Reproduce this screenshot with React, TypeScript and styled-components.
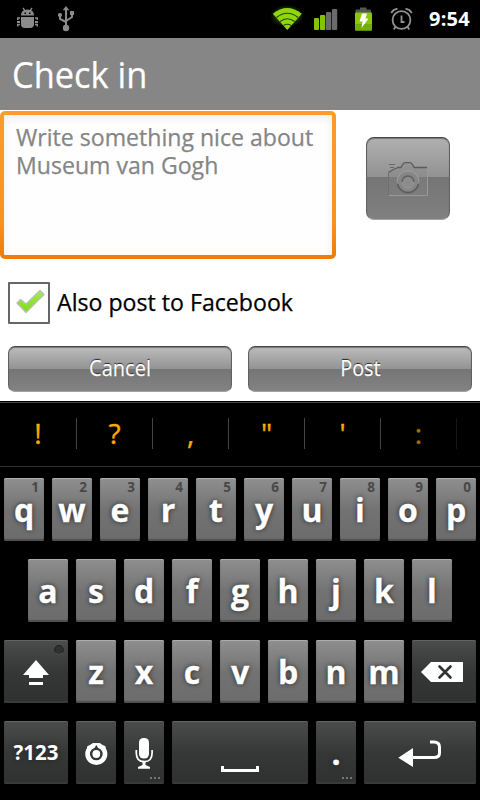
import React from "react";
import styled, { createGlobalStyle, css } from "styled-components";

const GlobalStyle = createGlobalStyle`
  * { box-sizing: border-box; }
  body { margin: 0; background: #fff; font-family: "Open Sans", "Noto Sans", sans-serif; }
`;

const Screen = styled.div`
  width: 480px;
  height: 800px;
  display: flex;
  flex-direction: column;
  overflow: hidden;
  background: #fff;
`;

const StatusBar = styled.header`
  height: 38px;
  display: flex;
  justify-content: space-between;
  background: #000;
`;

const StatusGroup = styled.div`
  display: flex;
`;

const Clock = styled.span`
  width: 51px;
  margin-left: 15px;
  color: #fff;
  font-size: 20px;
  font-weight: 700;
  line-height: 38px;
  letter-spacing: 0.2px;
  white-space: nowrap;
`;

/* Slightly condensed text, close to the proportions of Droid Sans. */
const Condensed = styled.span<{ $scale: number; $centered?: boolean }>`
  display: inline-block;
  transform: scaleX(${(p) => p.$scale});
  transform-origin: ${(p) => (p.$centered ? "center" : "left")};
  -webkit-text-stroke: 0.25px currentColor;
  white-space: nowrap;
`;

const TitleBar = styled.h1`
  height: 72px;
  margin: 0;
  padding-left: 12px;
  background: #868686;
  color: #fff;
  font-size: 36px;
  font-weight: 400;
  line-height: 73px;
`;

const Form = styled.main`
  height: 291px;
  padding-top: 1px;
`;

const ComposeRow = styled.div`
  display: flex;
  align-items: flex-start;
`;

const EditFrame = styled.div`
  width: 336px;
  height: 148px;
  padding: 4px;
  border-radius: 5px;
  background: linear-gradient(#fb9d2b, #f8921f 75%, #ef7a06);
`;

const EditField = styled.div`
  height: 140px;
  padding: 8px 0 0 12px;
  border-radius: 1px;
  background: #fefefe;
  box-shadow: inset 0 3px 9px #ededf0;
  color: #858585;
  font-size: 24px;
  line-height: 28px;
`;

const glossy = css`
  border: 1px solid #606060;
  border-top: 1px solid #44444a;
  border-bottom-color: #a2a2a2;
  background: linear-gradient(#bcbcbc, #939393 50%, #757575 50%, #838383);
  box-shadow: inset 0 1px 1px #77777a;
`;

const CameraButton = styled.button`
  ${glossy}
  width: 84px;
  height: 83px;
  margin: 26px 0 0 30px;
  padding: 0;
  border-radius: 8px;
  display: flex;
  background: linear-gradient(#b0b0b0, #929292 48%, #757575 48%, #808080);
`;

const CheckRow = styled.label`
  display: flex;
  height: 42px;
  margin: 23px 0 0 8px;
  gap: 7px;
`;

const CheckBox = styled.span`
  width: 42px;
  height: 42px;
  border: 2px solid #666;
  border-radius: 1px;
  display: flex;
  background: #fff;
`;

const CheckLabel = styled.span`
  color: #000;
  font-size: 24px;
  line-height: 39px;
`;

const ButtonRow = styled.div`
  display: grid;
  grid-template-columns: 1fr 1fr;
  gap: 16px;
  padding: 22px 8px 0;
`;

const ActionButton = styled.button`
  ${glossy}
  height: 46px;
  padding: 0 0 4px;
  border-radius: 7px;
  color: #fff;
  font-family: inherit;
  font-size: 22px;
  line-height: 40px;
  text-shadow: 0 -1px 1px #222;
`;

const Keyboard = styled.section`
  flex: 1;
  background: #000;
  border-top: 1px solid #000;
`;

const Suggestions = styled.div`
  height: 65px;
  padding-bottom: 2px;
  display: flex;
  align-items: center;
  border-top: 1px solid #444;
  border-bottom: 1px solid #303030;
`;

const Suggestion = styled.span<{ $fading?: boolean }>`
  width: 76px;
  height: 31px;
  border-right: 1px solid ${(p) => (p.$fading ? "#151515" : "#444")};
  color: ${(p) => (p.$fading ? "#a87000" : "#ffa900")};
  font-size: 28px;
  line-height: 30px;
  text-align: center;
  -webkit-text-stroke: 0.4px currentColor;
  &:first-child { width: 77px; }
`;

const Keys = styled.div`
  display: flex;
  flex-direction: column;
  gap: 18px;
  padding-top: 11px;
`;

const KeyRow = styled.div`
  display: flex;
  justify-content: center;
  gap: 8px;
`;

const Key = styled.div<{ $dark?: boolean; $width?: number }>`
  position: relative;
  width: ${(p) => p.$width ?? 40}px;
  height: 63px;
  display: flex;
  justify-content: center;
  border-radius: 2px;
  background: ${(p) =>
    p.$dark ? "linear-gradient(#4b4d4c, #363837 50%, #2f3030)" : "linear-gradient(#8f8f8f, #727272 52%, #6c6c6c)"};
  box-shadow: ${(p) =>
    p.$dark
      ? "inset 0 1px 0 #626463, inset 0 -2px 1px #3a3b3a"
      : "inset 0 1px 0 #adadad, inset 0 -2px 1px #4f4f4f"};
`;

const Letter = styled.span<{ $small?: boolean }>`
  color: #fff;
  font-size: ${(p) => (p.$small ? 20.5 : 32)}px;
  font-weight: 700;
  line-height: ${(p) => (p.$small ? 62 : 63)}px;
  text-shadow: 0 0 5px #222;
  -webkit-text-stroke: ${(p) => (p.$small ? 0 : 0.3)}px #fff;
`;

const Hint = styled.span`
  position: absolute;
  top: 1px;
  right: 5px;
  color: #484848;
  font-size: 13.5px;
  font-weight: 700;
  line-height: 17px;
`;

const More = styled.svg`
  position: absolute;
  right: 4px;
  bottom: 5px;
`;

const BugIcon = () => (
  <svg width="21" height="38" viewBox="17 0 21 38">
    <g fill="#8b8b8b">
      <path d="M21 15.500q0-6 6.500-6t6.500 6z" />
      <path d="M21 17h13v7q0 4-4 4h-5q-4 0-4-4z" />
      <path d="M23 8l2.500 3.500M32 8l-2.500 3.500" fill="none" stroke="#8b8b8b" strokeWidth="1.300" />
      <path d="M17 17.300h3v1.500h-1.500v1.200H17zM17 21h3v2h-3zM17 26.500v-2.700h3v1.500h-1.500v1.200zM38 17.300h-3v1.500h1.500v1.200H38zM38 21h-3v2h3zM38 26.500v-2.700h-3v1.500h1.500v1.200z" />
    </g>
    <path d="M24.500 12.500h1.500v1.500h-1.500zM29 12.500h1.500v1.500h-1.500z" fill="#000" />
  </svg>
);

const UsbIcon = () => (
  <svg width="17" height="38" viewBox="58 0 17 38">
    <g fill="#8b8b8b">
      <path d="M66 6l3.300 4.300h-6.600z" />
      <circle cx="66" cy="28" r="3.200" />
      <circle cx="60" cy="15" r="2.100" />
      <path d="M70 11h4v4h-4z" />
      <path d="M66 9v18M60 14v5l6 3M72 14v3l-6 4" fill="none" stroke="#8b8b8b" strokeWidth="2" />
    </g>
  </svg>
);

const WifiIcon = () => (
  <svg width="34" height="38" viewBox="270 0 34 38">
    <defs>
      <radialGradient id="wifiGlow">
        <stop offset="0.500" stopColor="#4e8300" stopOpacity="0.550" />
        <stop offset="1" stopColor="#4e8300" stopOpacity="0" />
      </radialGradient>
    </defs>
    <ellipse cx="287" cy="16" rx="17" ry="11" fill="url(#wifiGlow)" />
    <path d="M272.800 13.800Q287 2.300 301.800 13.800L287.300 30z" fill="#91d60b" />
    <g fill="none" stroke="#234800" strokeWidth="1.200">
      <path d="M276.500 17.500q10.800-8.500 21.500 0M280 21.500q7.300-5.500 14.600 0M283.500 25.500q3.800-2.500 7.600 0" />
    </g>
  </svg>
);

const SignalIcon = () => (
  <svg width="24" height="38" viewBox="314 0 24 38">
    <rect x="314" y="18" width="5" height="12" rx="1" fill="#82c30a" />
    <rect x="320" y="15" width="5.300" height="15" rx="1" fill="#82c30a" />
    <rect x="326" y="12" width="5.300" height="18" rx="1" fill="#6b6b6b" />
    <rect x="332" y="9" width="5.200" height="21" rx="1" fill="#6b6b6b" />
  </svg>
);

const BatteryIcon = () => (
  <svg width="19" height="38" viewBox="353.500 0 19 38">
    <path d="M355 13v-2.500q0-1 1-1h3.500v-2h6.500v2h3.500q1 0 1 1V13z" fill="#555" />
    <rect x="354.500" y="12.500" width="17" height="18" rx="1" fill="#88c808" />
    <rect x="354.500" y="24" width="17" height="6.500" rx="1" fill="#74ad05" />
    <path d="M361.500 13.500h5l-1.500 5h3L361 28l1-6.500h-3z" fill="#fff" />
  </svg>
);

const AlarmIcon = () => (
  <svg width="24" height="38" viewBox="390 0 24 38">
    <g fill="none" stroke="#929292" strokeWidth="1.800">
      <circle cx="401.500" cy="20" r="8.900" />
      <path d="M391.200 13q2-3.500 6.300-4.300M411.800 13q-2-3.500-6.300-4.300" />
      <path d="M401.500 15.500v6.500h3M395.700 26.500l-1.900 3M407.300 26.500l1.900 3" />
    </g>
  </svg>
);

const CameraIcon = () => (
  <svg width="82" height="81" viewBox="367 138 82 81" fill="none">
    <path d="M388.500 195V172q5-3.500 9.500-4.500h3l1.500-3q1-2 3-2h4q2 0 3 2l1.500 3h13V195z" fill="#848484" fillOpacity="0.350" />
    <path d="M388.500 172.500q5-3.500 9.500-5h3l1.500-3q1-1.800 3-1.800h4q2 0 3 1.800l1.500 3h13" stroke="#5c5c5c" strokeWidth="1.300" />
    <path d="M388.500 173v22" stroke="#707070" />
    <path d="M389 195.500H427.500V168.500" stroke="#999" />
    <path d="M389 164.500h6M390 167.500h4" stroke="#686868" />
    <circle cx="408" cy="182" r="11" fill="#868686" />
    <path d="M397.500 184a10.700 10.700 0 0 0 21 0" stroke="#5c5c5c" strokeWidth="1.600" />
    <path d="M397 182a11 11 0 0 1 22 0" stroke="#a0a0a0" />
    <circle cx="408" cy="182" r="6" fill="#8c8c8c" stroke="#999" />
    <path d="M402 182a6 6 0 0 1 12 0" stroke="#5e5e5e" strokeWidth="1.500" />
  </svg>
);

const CheckIcon = () => (
  <svg width="38" height="38" viewBox="10 284 38 38">
    <defs>
      <linearGradient id="tick" x1="0" y1="0" x2="0" y2="1">
        <stop stopColor="#a6ee45" />
        <stop offset="1" stopColor="#7edb16" />
      </linearGradient>
    </defs>
    <path d="M17 303l3.500-3.500 5.500 4.500 14-13.500 4 4L26 312.500z" fill="url(#tick)" stroke="#b9bfba" strokeWidth="1.400" strokeLinejoin="round" />
  </svg>
);

const ShiftIcon = () => (
  <svg width="64" height="63">
    <path d="M32 20L45 35h-6v3H25v-3h-6zM25 42h14v3H25z" fill="#fff" />
    <circle cx="55" cy="9.700" r="4.300" fill="#303131" stroke="#1d1e1e" />
    <path d="M51.500 13q3.500 3 7 0" fill="none" stroke="#505251" />
  </svg>
);

const DeleteIcon = () => (
  <svg width="64" height="63">
    <path d="M9 32L19 22h32v20H19z" fill="#fff" />
    <path d="M27.500 26.500l11 11M38.500 26.500l-11 11" stroke="#303131" strokeWidth="2.600" strokeLinecap="round" />
  </svg>
);

const SettingsIcon = () => (
  <svg width="40" height="63">
    <circle cx="20.300" cy="33" r="8.700" fill="none" stroke="#fff" strokeWidth="4.700" />
    <g fill="#fff">
      <circle cx="17.700" cy="24" r="2" />
      <circle cx="23" cy="24" r="2" />
      <circle cx="13" cy="26.500" r="2" />
      <circle cx="27.700" cy="26.500" r="2" />
    </g>
    <path d="M20.300 24l3 5h-6z" fill="#343535" />
    <circle cx="20.300" cy="33" r="3.900" fill="#fff" />
  </svg>
);

const MicIcon = () => (
  <svg width="40" height="63">
    <rect x="15" y="17" width="10" height="20.500" rx="4.500" fill="#fff" />
    <path d="M12.300 29v3q0 8.700 7.900 8.700t7.900-8.700v-3" fill="none" stroke="#fff" strokeWidth="1.700" />
    <path d="M18.500 40h3v4l4.500 2v1.700H14V46l4.500-2z" fill="#fff" />
  </svg>
);

const SpaceIcon = () => (
  <svg width="136" height="63">
    <path d="M49 45h3v3h32v-3h3v6H49z" fill="#fff" />
  </svg>
);

const EnterIcon = () => (
  <svg width="112" height="63">
    <path d="M34.300 36.700L49 27v19z" fill="#fff" />
    <path d="M48 36.500h22q5.500 0 5.500-4.500v-6q0-5-5.500-5h-4" fill="none" stroke="#fff" strokeWidth="3" />
  </svg>
);

const MoreDots = () => (
  <More width="10" height="2">
    <path d="M0 0h2v2H0zM4 0h2v2H4zM8 0h2v2H8z" fill="#777" />
  </More>
);

const LeftIcons = styled(StatusGroup)`
  padding-left: 17px;
  gap: 20px;
`;

const RightIcons = styled(StatusGroup)`
  & > svg:nth-child(2) { margin-left: 10px; }
  & > svg:nth-child(3) { margin-left: 15.5px; }
  & > svg:nth-child(4) { margin-left: 17.5px; }
`;

const SUGGESTIONS = ["!", "?", ",", '"', "'", ":"];

export default function App() {
  return (
    <>
      <GlobalStyle />
      <Screen>
        <StatusBar>
          <LeftIcons>
            <BugIcon />
            <UsbIcon />
          </LeftIcons>
          <RightIcons>
            <WifiIcon />
            <SignalIcon />
            <BatteryIcon />
            <AlarmIcon />
            <Clock>9:54</Clock>
          </RightIcons>
        </StatusBar>
        <TitleBar>
          <Condensed $scale={0.955}>Check in</Condensed>
        </TitleBar>
        <Form>
          <ComposeRow>
            <EditFrame>
              <EditField>
                <Condensed $scale={0.962}>
                  Write something nice about
                  <br />
                  Museum van Gogh
                </Condensed>
              </EditField>
            </EditFrame>
            <CameraButton>
              <CameraIcon />
            </CameraButton>
          </ComposeRow>
          <CheckRow>
            <CheckBox>
              <CheckIcon />
            </CheckBox>
            <CheckLabel>
              <Condensed $scale={0.964}>Also post to Facebook</Condensed>
            </CheckLabel>
          </CheckRow>
          <ButtonRow>
            <ActionButton>
              <Condensed $scale={0.91} $centered>
                Cancel
              </Condensed>
            </ActionButton>
            <ActionButton>
              <Condensed $scale={0.9} $centered>
                Post
              </Condensed>
            </ActionButton>
          </ButtonRow>
        </Form>
        <Keyboard>
          <Suggestions>
            {SUGGESTIONS.map((s) => (
              <Suggestion key={s} $fading={s === ":"}>
                {s}
              </Suggestion>
            ))}
          </Suggestions>
          <Keys>
            <KeyRow>
              {[..."qwertyuiop"].map((c, i) => (
                <Key key={c}>
                  <Hint>{(i + 1) % 10}</Hint>
                  <Letter>{c}</Letter>
                </Key>
              ))}
            </KeyRow>
            <KeyRow>
              {[..."asdfghjkl"].map((c) => (
                <Key key={c}>
                  <Letter>{c}</Letter>
                </Key>
              ))}
            </KeyRow>
            <KeyRow>
              <Key $dark $width={64}>
                <ShiftIcon />
              </Key>
              {[..."zxcvbnm"].map((c) => (
                <Key key={c}>
                  <Letter>{c}</Letter>
                </Key>
              ))}
              <Key $dark $width={64}>
                <DeleteIcon />
              </Key>
            </KeyRow>
            <KeyRow>
              <Key $dark $width={64}>
                <Letter $small>?123</Letter>
              </Key>
              <Key $dark>
                <SettingsIcon />
              </Key>
              <Key $dark>
                <MicIcon />
                <MoreDots />
              </Key>
              <Key $dark $width={136}>
                <SpaceIcon />
              </Key>
              <Key $dark>
                <Letter>.</Letter>
                <MoreDots />
              </Key>
              <Key $dark $width={112}>
                <EnterIcon />
              </Key>
            </KeyRow>
          </Keys>
        </Keyboard>
      </Screen>
    </>
  );
}
